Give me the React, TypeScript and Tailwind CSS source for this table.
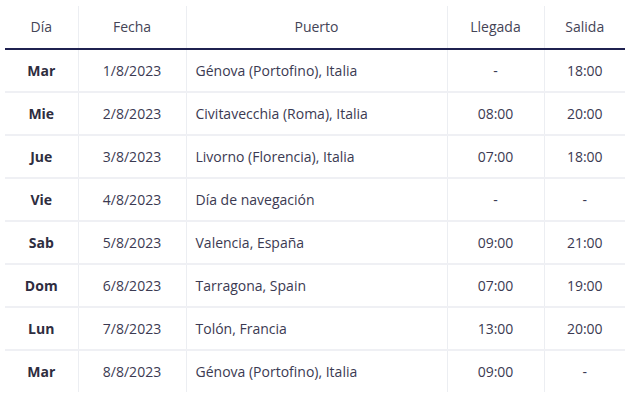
const rows = [
  { dia: 'Mar', fecha: '1/8/2023', puerto: 'Génova (Portofino), Italia', llegada: '-', salida: '18:00' },
  { dia: 'Mie', fecha: '2/8/2023', puerto: 'Civitavecchia (Roma), Italia', llegada: '08:00', salida: '20:00' },
  { dia: 'Jue', fecha: '3/8/2023', puerto: 'Livorno (Florencia), Italia', llegada: '07:00', salida: '18:00' },
  { dia: 'Vie', fecha: '4/8/2023', puerto: 'Día de navegación', llegada: '-', salida: '-' },
  { dia: 'Sab', fecha: '5/8/2023', puerto: 'Valencia, España', llegada: '09:00', salida: '21:00' },
  { dia: 'Dom', fecha: '6/8/2023', puerto: 'Tarragona, Spain', llegada: '07:00', salida: '19:00' },
  { dia: 'Lun', fecha: '7/8/2023', puerto: 'Tolón, Francia', llegada: '13:00', salida: '20:00' },
  { dia: 'Mar', fecha: '8/8/2023', puerto: 'Génova (Portofino), Italia', llegada: '09:00', salida: '-' },
];

export default function App() {
  return (
    <div className="w-[629px] h-[400px] bg-white pt-[6px] pl-[5px] font-['Open_Sans',sans-serif] text-[14px] text-[#3b3a52]">
      <table className="table-fixed border-collapse w-[620px]">
        <colgroup>
          <col className="w-[73px]" />
          <col className="w-[108px]" />
          <col className="w-[261px]" />
          <col className="w-[97px]" />
          <col className="w-[81px]" />
        </colgroup>
        <thead>
          <tr className="h-[43px] border-b-2 border-[#1f2150]">
            <th className="font-normal text-center text-[#444456] border-r border-[#eceef2] pb-[1px]">Día</th>
            <th className="font-normal text-center text-[#444456] border-r border-[#eceef2] pb-[1px]">Fecha</th>
            <th className="font-normal text-center text-[#444456] border-r border-[#eceef2] pb-[1px]">Puerto</th>
            <th className="font-normal text-center text-[#444456] border-r border-[#eceef2] pb-[1px]">Llegada</th>
            <th className="font-normal text-center text-[#444456] pb-[1px]">Salida</th>
          </tr>
        </thead>
        <tbody>
          {rows.map((r, i) => (
            <tr key={i} className={i < rows.length - 1 ? 'h-[43px] border-b-2 border-[#eff0f4]' : 'h-[42px]'}>
              <td className="text-center font-bold text-[#2e2d40] border-r border-[#eceef2]">{r.dia}</td>
              <td className="text-center border-r border-[#eceef2]">{r.fecha}</td>
              <td className="pl-[9px] border-r border-[#eceef2]">{r.puerto}</td>
              <td className="text-center border-r border-[#eceef2]">{r.llegada}</td>
              <td className="text-center">{r.salida}</td>
            </tr>
          ))}
        </tbody>
      </table>
    </div>
  );
}
